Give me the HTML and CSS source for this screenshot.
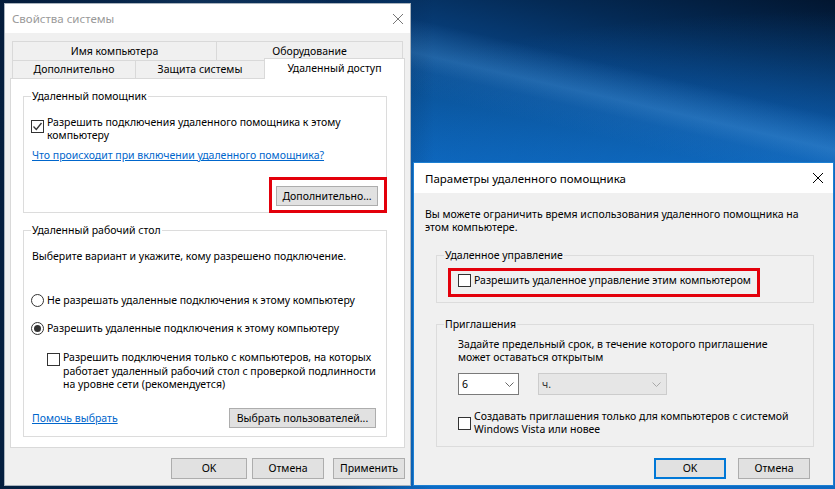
FILE: index.html
```html
<!DOCTYPE html>
<html lang="ru">
<head>
  <meta charset="UTF-8" />
  <title>Свойства системы</title>
  <link rel="stylesheet" href="styles.css">
</head>
<body>
  <div class="desktop">

    <div class="window sys-window">
      <div class="titlebar">
        <span class="title">Свойства системы</span>
        <svg class="close" viewBox="0 0 10 10"><path d="M0 0L10 10M10 0L0 10" /></svg>
      </div>
      <div class="sys-body">
        <div class="tabs">
          <div class="tab-row row-top">
            <div class="tab tab-name">Имя компьютера</div>
            <div class="tab tab-hw">Оборудование</div>
          </div>
          <div class="tab-row row-bottom">
            <div class="tab tab-adv">Дополнительно</div>
            <div class="tab tab-prot">Защита системы</div>
            <div class="tab tab-remote active">Удаленный доступ</div>
          </div>
        </div>

        <div class="panel">
          <div class="group ra-group">
            <div class="legend">Удаленный помощник</div>
            <div class="check-row ra-check">
              <span class="checkbox">
                <svg viewBox="0 0 11 11"><path d="M1.5 5.5L4.3 8.5L9.5 2" /></svg>
              </span>
              <span class="label">Разрешить подключения удаленного помощника к этому<br>компьютеру</span>
            </div>
            <a class="link ra-link">Что происходит при включении удаленного помощника?</a>
            <div class="highlight ra-highlight">
              <button class="btn btn-advanced">Дополнительно...</button>
            </div>
          </div>

          <div class="group rd-group">
            <div class="legend">Удаленный рабочий стол</div>
            <div class="rd-intro">Выберите вариант и укажите, кому разрешено подключение.</div>
            <div class="radio-row radio-off">
              <span class="radio"></span>
              <span class="label">Не разрешать удаленные подключения к этому компьютеру</span>
            </div>
            <div class="radio-row radio-on">
              <span class="radio selected"></span>
              <span class="label">Разрешить удаленные подключения к этому компьютеру</span>
            </div>
            <div class="check-row rd-check">
              <span class="checkbox"></span>
              <span class="label">Разрешить подключения только с компьютеров, на которых<br>работает удаленный рабочий стол с проверкой подлинности<br>на уровне сети (рекомендуется)</span>
            </div>
            <div class="rd-footer">
              <a class="link">Помочь выбрать</a>
              <button class="btn btn-users">Выбрать пользователей...</button>
            </div>
          </div>
        </div>

        <div class="dialog-buttons sys-buttons">
          <button class="btn btn-ok">OK</button>
          <button class="btn btn-cancel">Отмена</button>
          <button class="btn btn-apply">Применить</button>
        </div>
      </div>
    </div>

    <div class="window ra-window">
      <div class="titlebar">
        <span class="title">Параметры удаленного помощника</span>
        <svg class="close" viewBox="0 0 10 10"><path d="M0 0L10 10M10 0L0 10" /></svg>
      </div>
      <div class="ra-body">
        <div class="ra-intro">Вы можете ограничить время использования удаленного помощника на<br>этом компьютере.</div>

        <div class="group rc-group">
          <div class="legend">Удаленное управление</div>
          <div class="highlight rc-highlight">
            <div class="check-row">
              <span class="checkbox"></span>
              <span class="label">Разрешить удаленное управление этим компьютером</span>
            </div>
          </div>
        </div>

        <div class="group inv-group">
          <div class="legend">Приглашения</div>
          <div class="inv-text">Задайте предельный срок, в течение которого приглашение<br>может оставаться открытым</div>
          <div class="combos">
            <div class="combo combo-hours">
              <span>6</span>
              <svg class="chevron" viewBox="0 0 9 5"><path d="M0.5 0.5L4.5 4.5L8.5 0.5" /></svg>
            </div>
            <div class="combo combo-unit">
              <span>ч.</span>
              <svg class="chevron" viewBox="0 0 9 5"><path d="M0.5 0.5L4.5 4.5L8.5 0.5" /></svg>
            </div>
          </div>
          <div class="check-row inv-check">
            <span class="checkbox"></span>
            <span class="label">Создавать приглашения только для компьютеров с системой<br>Windows Vista или новее</span>
          </div>
        </div>

        <div class="dialog-buttons ra-buttons">
          <button class="btn btn-default">OK</button>
          <button class="btn">Отмена</button>
        </div>
      </div>
    </div>

  </div>
</body>
</html>
```

FILE: styles.css
```css
* {
  box-sizing: border-box;
}

body {
  margin: 0;
  font-family: "Noto Sans", "Open Sans", sans-serif;
  font-size: 10.5px;
  line-height: 13px;
  color: #000;
}

.desktop {
  position: relative;
  width: 835px;
  height: 489px;
  overflow: hidden;
  background:
    linear-gradient(90deg, rgba(4, 22, 48, 0.9) 0%, rgba(4, 22, 48, 0.5) 40%, transparent 52%),
    linear-gradient(193deg, transparent 17%, rgba(90, 170, 240, 0.3) 22%, rgba(60, 150, 235, 0.12) 24.5%, transparent 28%),
    radial-gradient(ellipse at 100% 45%, rgba(20, 130, 235, 0.6), transparent 55%),
    linear-gradient(193deg, #021630 0%, #042a55 10%, #073d78 18%, #0a5399 28%, #0c63b8 40%, #0d6fcb 100%);
}

/* windows */
.window {
  position: absolute;
  display: flex;
  flex-direction: column;
  background: #f0f0f0;
}

.sys-window {
  left: 4px;
  top: 3px;
  width: 407px;
  height: 483px;
  border: 1px solid #a9b3bd;
}

.ra-window {
  left: 413px;
  top: 162px;
  width: 421px;
  height: 324px;
  border: 1px solid #1c7fd2;
}

.titlebar {
  flex: none;
  display: flex;
  align-items: center;
  justify-content: space-between;
  background: #fff;
  font-size: 11.5px;
}

.sys-window .titlebar {
  height: 29px;
  padding: 0 7px;
  color: #999;
}

.ra-window .titlebar {
  height: 30px;
  padding: 0 10px 0 11px;
}

.close {
  width: 10px;
  height: 10px;
  fill: none;
  stroke: #000;
  stroke-width: 1;
}

.sys-window .close {
  stroke: #777;
}

.label,
.link,
.legend,
.rd-intro,
.ra-intro,
.inv-text {
  white-space: nowrap;
}

/* tabs */
.sys-body {
  display: flex;
  flex-direction: column;
  padding: 8px 5px 0 5px;
}

.tabs {
  margin-left: 2px;
}

.tab-row {
  display: flex;
}

.row-top {
  height: 20px;
}

.row-bottom {
  height: 17px;
}

.tab {
  display: flex;
  align-items: center;
  justify-content: center;
  border: 1px solid #d9d9d9;
  background: #f0f0f0;
}

.row-top .tab {
  height: 20px;
}

.row-bottom .tab {
  height: 18px;
  border-top: none;
}

.tab + .tab {
  margin-left: -1px;
}

.tab-name { width: 205px; }
.tab-hw { width: 187px; }
.tab-adv { width: 124px; }
.tab-prot { width: 130px; }

.tab.active {
  position: relative;
  z-index: 1;
  width: 141px;
  height: 21px;
  margin-top: -3px;
  padding-bottom: 2px;
  background: #fff;
  border-top: 1px solid #d9d9d9;
  border-bottom: none;
}

.panel {
  width: 395px;
  height: 370px;
  border: 1px solid #d9d9d9;
  background: #fff;
}

/* group boxes */
.group {
  display: flex;
  flex-direction: column;
  align-items: flex-start;
  border: 1px solid #dcdcdc;
}

.legend {
  line-height: 15px;
  margin-top: -8px;
  padding: 0 1px;
  background: #fff;
}

.ra-window .legend {
  background: #f0f0f0;
}

.ra-group {
  margin: 17px 0 0 12px;
  width: 364px;
  padding: 0 0 0 7px;
}

.check-row {
  display: flex;
  align-items: flex-start;
  gap: 3px;
}

.checkbox {
  flex: none;
  width: 13px;
  height: 13px;
  border: 1px solid #333;
  background: #fff;
}

.checkbox svg {
  display: block;
  width: 11px;
  height: 11px;
  fill: none;
  stroke: #333;
  stroke-width: 1.3;
}

.ra-check {
  margin-top: 12px;
}

.ra-check .checkbox {
  margin-top: 4px;
}

.link {
  display: block;
  color: #0066cc;
  text-decoration: underline;
  margin-left: 1px;
}

.ra-link {
  margin-top: 7px;
}

.highlight {
  border: 3px solid #e3000b;
}

.ra-highlight {
  align-self: flex-end;
  width: 118px;
  height: 36px;
  margin: 15px -1px -1px 0;
  padding: 6px 0 0 4px;
}

.btn {
  font: inherit;
  color: #000;
  background: #e1e1e1;
  border: 1px solid #adadad;
  padding: 0;
  height: 21px;
}

.btn-advanced {
  display: block;
  width: 102px;
  height: 20px;
}

.rd-group {
  margin: 17px 0 0 12px;
  width: 364px;
  padding: 0 0 8px 7px;
}

.rd-intro {
  margin: 12px 0 0 1px;
}

.radio-row {
  display: flex;
  align-items: center;
  gap: 3px;
}

.radio-off {
  margin-top: 31px;
}

.radio-on {
  margin-top: 15px;
}

.radio {
  flex: none;
  width: 13px;
  height: 13px;
  border: 1px solid #333;
  border-radius: 50%;
  background: #fff;
  display: flex;
  align-items: center;
  justify-content: center;
}

.radio.selected::after {
  content: "";
  width: 7px;
  height: 7px;
  border-radius: 50%;
  background: #333;
}

.rd-check {
  margin: 16px 0 0 16px;
  line-height: 13.5px;
}

.rd-check .checkbox {
  margin-top: 2px;
}

.rd-footer {
  align-self: stretch;
  display: flex;
  align-items: center;
  justify-content: space-between;
  margin-top: 16.5px;
  padding-right: 10px;
}

.btn-users {
  width: 147px;
  height: 20px;
}

.dialog-buttons {
  display: flex;
  justify-content: flex-end;
}

.sys-buttons {
  margin-top: 10px;
}

.sys-buttons .btn {
  width: 72px;
}

.sys-buttons .btn-ok {
  width: 76px;
  margin-right: 5px;
}

.sys-buttons .btn-cancel {
  margin-right: 9px;
}

/* remote assistance settings */
.ra-body {
  display: flex;
  flex-direction: column;
  padding: 15px 0 0 11px;
}

.rc-group {
  margin: 21px 0 0 11px;
  width: 378px;
  padding: 0 0 5px 11px;
}

.rc-group .legend {
  margin-left: -4px;
}

.rc-highlight {
  margin-top: 5px;
  width: 312px;
  height: 29px;
  padding: 3px 0 0 7px;
}

.inv-group {
  margin: 21px 0 0 11px;
  width: 378px;
  padding: 0 0 9px 21px;
}

.inv-group .legend {
  margin-left: -14px;
}

.inv-text {
  margin-top: 6px;
}

.combos {
  display: flex;
  gap: 19px;
  margin-top: 9px;
}

.combo {
  height: 22px;
  display: flex;
  align-items: center;
  justify-content: space-between;
  border: 1px solid #7a7a7a;
  background: #fff;
  padding: 0 4px 0 3px;
}

.combo-hours {
  width: 61px;
}

.combo-unit {
  width: 129px;
  padding-right: 5px;
  background: #e6e6e6;
  border-color: #cccccc;
  color: #333;
}

.chevron {
  width: 9px;
  height: 5px;
  fill: none;
  stroke: #666;
  stroke-width: 1;
}

.combo-unit .chevron {
  stroke: #a8a8a8;
}

.inv-check {
  margin-top: 14.5px;
  line-height: 13.5px;
  align-items: center;
}

.ra-buttons {
  margin-top: 11px;
  gap: 12px;
  padding-right: 23px;
}

.ra-buttons .btn {
  width: 72px;
}

.btn-default {
  border-color: #0078d7;
  box-shadow: inset 0 0 0 1px #0078d7;
}
```
